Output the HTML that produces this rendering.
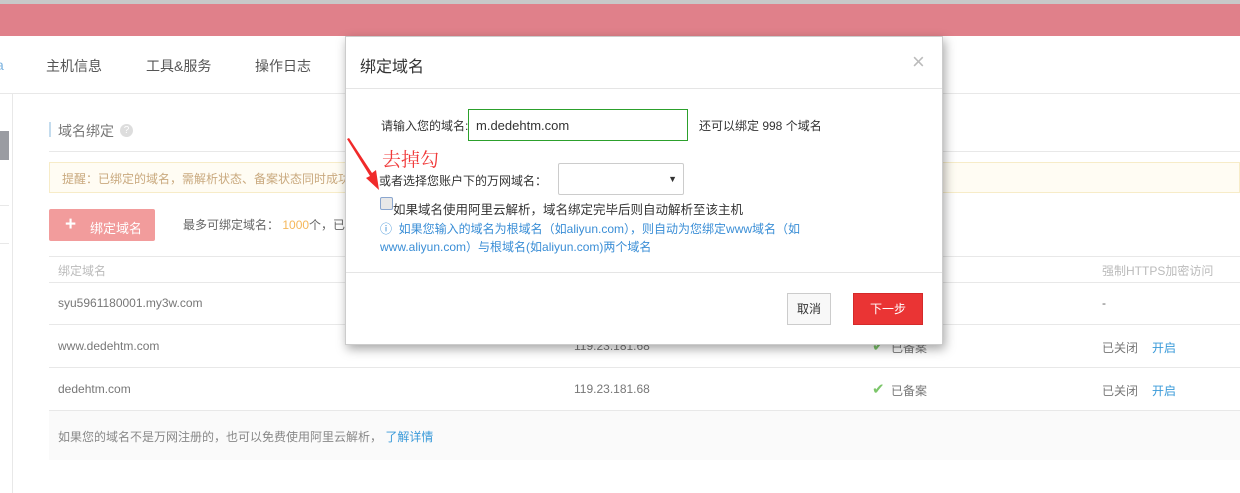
<!DOCTYPE html>
<html><head><meta charset="utf-8"><style>
*{margin:0;padding:0;box-sizing:border-box}
body{width:1240px;height:493px;overflow:hidden;background:#fff;font-family:"Liberation Sans","Noto Sans CJK SC",sans-serif;font-size:12px;color:#666;position:relative}
.a{position:absolute;white-space:nowrap}
</style></head><body>
<div class="a" style="left:0;top:0;width:1240px;height:4px;background:#c8c8c8"></div>
<div class="a" style="left:0;top:4px;width:1240px;height:32px;background:#e0808a"></div>
<div class="a" style="left:0;top:93px;width:1240px;height:1px;background:#e8e8e8"></div>
<div class="a" style="left:-4px;top:57px;font-size:14px;color:#7fb5e0">a</div>
<div class="a" style="left:46px;top:56px;font-size:14px;color:#555">主机信息</div>
<div class="a" style="left:146px;top:56px;font-size:14px;color:#555">工具&amp;服务</div>
<div class="a" style="left:255px;top:56px;font-size:14px;color:#555">操作日志</div>
<div class="a" style="left:12px;top:94px;width:1px;height:399px;background:#e8e8e8"></div>
<div class="a" style="left:0;top:131px;width:9px;height:29px;background:#9a9ca2"></div>
<div class="a" style="left:0;top:205px;width:9px;height:1px;background:#e8e8e8"></div>
<div class="a" style="left:0;top:243px;width:9px;height:1px;background:#e8e8e8"></div>
<div class="a" style="left:49px;top:122px;width:2px;height:15px;background:#c4dcee"></div>
<div class="a" style="left:58px;top:121px;font-size:14px;color:#777">域名绑定</div>
<div class="a" style="left:120px;top:124px;width:13px;height:13px;border-radius:50%;background:#ddd;color:#fff;font-size:10px;text-align:center;line-height:13px">?</div>
<div class="a" style="left:49px;top:151px;width:1191px;height:1px;background:#e8e8e8"></div>
<div class="a" style="left:49px;top:162px;width:1191px;height:31px;background:#fffcf3;border:1px solid #f7ecc8"></div>
<div class="a" style="left:62px;top:170px;color:#c9a97e">提醒：已绑定的域名，需解析状态、备案状态同时成功</div>
<div class="a" style="left:49px;top:209px;width:106px;height:32px;background:#f29c9c;border-radius:2px;color:#fff;font-size:13px"><span style="position:absolute;left:16px;top:5px;font-size:19px;font-weight:bold;line-height:22px">+</span><span style="position:absolute;left:41px;top:9px">绑定域名</span></div>
<div class="a" style="left:183px;top:216px;color:#666">最多可绑定域名： <span style="color:#f5b75a">1000</span>个，已</div>
<div class="a" style="left:49px;top:256px;width:1191px;height:1px;background:#e8e8e8"></div>
<div class="a" style="left:58px;top:262px;color:#bbb">绑定域名</div>
<div class="a" style="left:1102px;top:262px;color:#bbb">强制HTTPS加密访问</div>
<div class="a" style="left:49px;top:282px;width:1191px;height:1px;background:#e8e8e8"></div>
<div class="a" style="left:58px;top:296px;color:#777">syu5961180001.my3w.com</div>
<div class="a" style="left:1102px;top:296px">-</div>
<div class="a" style="left:49px;top:324px;width:1191px;height:1px;background:#e8e8e8"></div>
<div class="a" style="left:58px;top:339px;color:#777">www.dedehtm.com</div>
<div class="a" style="left:574px;top:339px;color:#777">119.23.181.68</div>
<div class="a" style="left:872px;top:337px;color:#7cc66a;font-size:15px">✔</div><div class="a" style="left:891px;top:339px;color:#777">已备案</div>
<div class="a" style="left:1102px;top:339px;color:#777">已关闭</div><div class="a" style="left:1152px;top:339px;color:#3a9ad9">开启</div>
<div class="a" style="left:49px;top:367px;width:1191px;height:1px;background:#e8e8e8"></div>
<div class="a" style="left:58px;top:382px;color:#777">dedehtm.com</div>
<div class="a" style="left:574px;top:382px;color:#777">119.23.181.68</div>
<div class="a" style="left:872px;top:380px;color:#7cc66a;font-size:15px">✔</div><div class="a" style="left:891px;top:382px;color:#777">已备案</div>
<div class="a" style="left:1102px;top:382px;color:#777">已关闭</div><div class="a" style="left:1152px;top:382px;color:#3a9ad9">开启</div>
<div class="a" style="left:49px;top:410px;width:1191px;height:50px;background:#fafafa;border-top:1px solid #e8e8e8"></div>
<div class="a" style="left:58px;top:428px;color:#888">如果您的域名不是万网注册的，也可以免费使用阿里云解析， <span style="color:#3a9ad9">了解详情</span></div>

<div class="a" style="left:345px;top:36px;width:598px;height:309px;background:#fff;border:1px solid #ccc;box-shadow:2px 4px 10px rgba(0,0,0,.35)">
<div class="a" style="left:14px;top:16px;font-size:16px;color:#333">绑定域名</div>
<div class="a" style="left:566px;top:12px;font-size:22px;color:#bbb">×</div>
<div class="a" style="left:0;top:51px;width:596px;height:1px;background:#e5e5e5"></div>
<div class="a" style="left:35px;top:80px;color:#333;font-size:12px">请输入您的域名:</div>
<div class="a" style="left:122px;top:72px;width:220px;height:32px;border:1px solid #2ca02c;padding:8px 7px;font-size:13px;color:#333">m.dedehtm.com</div>
<div class="a" style="left:353px;top:80px;color:#333">还可以绑定 998 个域名</div>
<div class="a" style="left:36px;top:108px;font-size:19px;color:#f03a3a;font-family:'Noto Serif CJK SC',serif">去掉勾</div>
<div class="a" style="left:33px;top:135px;color:#333">或者选择您账户下的万网域名：</div>
<div class="a" style="left:212px;top:126px;width:126px;height:32px;border:1px solid #ccc;border-radius:2px"><span style="position:absolute;right:6px;top:10px;font-size:9px;color:#333">▼</span></div>
<div class="a" style="left:34px;top:160px;width:13px;height:13px;border:1px solid #8aa6cf;background:#e8e8e8;border-radius:2px"></div>
<div class="a" style="left:47px;top:162px;color:#333;font-size:12.5px">如果域名使用阿里云解析，域名绑定完毕后则自动解析至该主机</div>
<div class="a" style="left:34px;top:183px;color:#3a8ed6;font-size:12px;line-height:18px">ⓘ&nbsp;&nbsp;如果您输入的域名为根域名（如aliyun.com），则自动为您绑定www域名（如<br>www.aliyun.com）与根域名(如aliyun.com)两个域名</div>
<div class="a" style="left:0;top:235px;width:596px;height:1px;background:#e5e5e5"></div>
<div class="a" style="left:441px;top:256px;width:44px;height:32px;border:1px solid #ccc;background:#f8f8f8;color:#333;text-align:center;line-height:30px">取消</div>
<div class="a" style="left:507px;top:256px;width:70px;height:32px;background:#ea3434;border:1px solid #d42a2a;color:#fff;text-align:center;line-height:30px">下一步</div>
</div>
<svg class="a" style="left:0;top:0" width="1240" height="493"><polygon points="347,139 349,138 372,173 376,170 379,190 366,178 370,176" fill="#f02a2a"/></svg>
</body></html>
